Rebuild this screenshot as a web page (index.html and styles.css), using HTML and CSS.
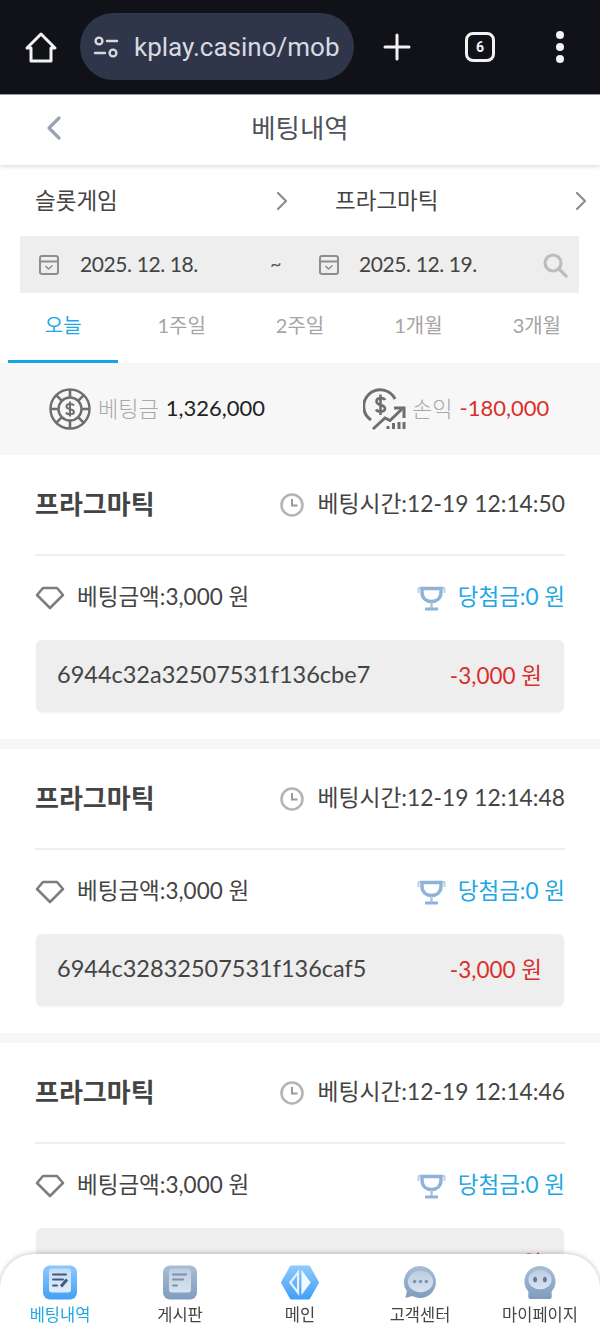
FILE: index.html
```html
<!DOCTYPE html>
<html lang="ko">
<head>
  <meta charset="utf-8">
  <title>베팅내역</title>
  <link rel="stylesheet" href="styles.css">
</head>
<body>
  <div class="browser-bar">
    <svg class="br-home" width="34" height="34" viewBox="0 0 34 34" fill="none" stroke="#f2f2f4" stroke-width="3" stroke-linejoin="round"><path d="M17 4 L31 18 H27 V31 H7 V18 H3 Z"/></svg>
    <div class="url-pill">
      <svg width="26" height="24" viewBox="0 0 26 24" fill="none" stroke="#d8dae2" stroke-width="2.4" stroke-linecap="round"><circle cx="6" cy="6" r="3.4"/><path d="M14 6 H24"/><path d="M2 18 H12"/><circle cx="20" cy="18" r="3.4"/></svg>
      <span class="url-text">kplay.casino/mob</span>
    </div>
    <svg class="br-plus" width="30" height="30" viewBox="0 0 30 30" stroke="#f2f2f4" stroke-width="3" stroke-linecap="round"><path d="M15 3 V27 M3 15 H27"/></svg>
    <div class="br-tabs">6</div>
    <div class="br-more"><i></i><i></i><i></i></div>
  </div>

  <header class="page-head">
    <svg class="back" width="16" height="26" viewBox="0 0 16 26" fill="none" stroke="#9aa3b2" stroke-width="3.2" stroke-linecap="round" stroke-linejoin="round"><path d="M13 3 L3 13 L13 23"/></svg>
    <h1>베팅내역</h1>
  </header>

  <div class="category-row">
    <div class="category">
      <span>슬롯게임</span>
      <svg width="12" height="20" viewBox="0 0 12 20" fill="none" stroke="#8c8c8c" stroke-width="2.2" stroke-linecap="round" stroke-linejoin="round"><path d="M2 2 L10 10 L2 18"/></svg>
    </div>
    <div class="category second">
      <span>프라그마틱</span>
      <svg width="12" height="20" viewBox="0 0 12 20" fill="none" stroke="#8c8c8c" stroke-width="2.2" stroke-linecap="round" stroke-linejoin="round"><path d="M2 2 L10 10 L2 18"/></svg>
    </div>
  </div>

  <div class="date-bar">
    <div class="date-field">
      <svg width="22" height="22" viewBox="0 0 22 22" fill="none" stroke="#8e8e8e" stroke-width="2"><rect x="2" y="2" width="18" height="18" rx="2"/><path d="M2 7.5 H20"/><path d="M7.5 12 L10.5 15 L14.5 11.5" stroke-width="1.6"/></svg>
      <span>2025. 12. 18.</span>
    </div>
    <span class="tilde">~</span>
    <div class="date-field end">
      <svg width="22" height="22" viewBox="0 0 22 22" fill="none" stroke="#8e8e8e" stroke-width="2"><rect x="2" y="2" width="18" height="18" rx="2"/><path d="M2 7.5 H20"/><path d="M7.5 12 L10.5 15 L14.5 11.5" stroke-width="1.6"/></svg>
      <span>2025. 12. 19.</span>
    </div>
    <svg class="search" width="26" height="26" viewBox="0 0 26 26" fill="none" stroke="#bdbdbd" stroke-width="3.2" stroke-linecap="round"><circle cx="11" cy="11" r="8"/><path d="M17 17 L24 24"/></svg>
  </div>

  <nav class="tabs">
    <a class="tab active">오늘</a>
    <a class="tab">1주일</a>
    <a class="tab">2주일</a>
    <a class="tab">1개월</a>
    <a class="tab">3개월</a>
  </nav>

  <div class="summary">
    <div class="sum-item">
      <svg width="42" height="46" viewBox="0 0 42 46" fill="none" stroke="#6e6e6e">
        <circle cx="21" cy="23" r="19.5" stroke-width="2.4"/>
        <circle cx="21" cy="23" r="11.5" stroke-width="2.4"/>
        <path d="M21 3.5 V11.5 M21 34.5 V42.5 M1.5 23 H9.5 M32.5 23 H40.5 M7.2 9.2 L12.9 14.9 M29.1 31.1 L34.8 36.8 M34.8 9.2 L29.1 14.9 M12.9 31.1 L7.2 36.8" stroke-width="2.6"/>
        <path d="M25 19.5 C24 17.5 17.5 17 17.5 20.5 C17.5 24 25 22.5 25 26 C25 29 18 28.8 17 26.5 M21 15.5 V30.5" stroke-width="2"/>
      </svg>
      <span class="sum-label">베팅금</span>
      <span class="sum-value">1,326,000</span>
    </div>
    <div class="sum-item profit">
      <svg width="43" height="44" viewBox="0 0 43 44" fill="none" stroke="#6e6e6e">
        <path d="M8 33 A16.500 16.500 0 1 1 32 12" stroke-width="3"/>
        <path d="M22 13 C21 10.500 13.500 10 13.500 14.500 C13.500 19 22 17 22 21.500 C22 25.500 14.500 25 13 22.500 M17.500 7.500 V28" stroke-width="2.6"/>
        <path d="M10 42 L22 31 L27 33.500 L39 22" stroke-width="3"/>
        <path d="M31 21 H41 V31" stroke-width="3"/>
        <path d="M25 42 V39 M30.500 42 V36 M36 42 V35 M41 42 V35" stroke-width="3"/>
      </svg>
      <span class="sum-label">손익</span>
      <span class="sum-value loss">-180,000</span>
    </div>
  </div>

  <section class="bet-card">
    <div class="card-top">
      <h2>프라그마틱</h2>
      <div class="bet-time">
        <svg width="24" height="24" viewBox="0 0 24 24" fill="none" stroke="#b5b5b5" stroke-width="2.6"><circle cx="12" cy="12" r="10.500"/><path d="M12 6 V12.500 H17.500" stroke="#9a9a9a" stroke-width="2"/></svg>
        <span>베팅시간:12-19 12:14:50</span>
      </div>
    </div>
    <div class="card-mid">
      <div class="stake">
        <svg class="diamond" width="30" height="24" viewBox="0 0 30 24" fill="none" stroke="#7d7d7d" stroke-width="2.6" stroke-linejoin="round"><path d="M8 2 H22 L28 9 L15 22 L2 9 Z"/></svg>
        <span>베팅금액:3,000 원</span>
      </div>
      <div class="win">
        <svg width="29" height="26" viewBox="0 0 29 26" fill="none"><path d="M1 3 H5 M24 3 H28 M1.500 3 V8 M27.500 3 V8" stroke="#bcd2e8" stroke-width="2"/><path d="M5 3.500 H24 V7 C24 13.500 19.500 16.500 14.500 16.500 C9.500 16.500 5 13.500 5 7 Z" stroke="#8fb3d6" stroke-width="3.4"/><path d="M14.500 17 V23" stroke="#a9c4e0" stroke-width="2.400"/><path d="M8 24 H21" stroke="#8fb3d6" stroke-width="3"/></svg>
        <span>당첨금:0 원</span>
      </div>
    </div>
    <div class="tx-box">
      <span class="tx-id">6944c32a32507531f136cbe7</span>
      <span class="loss">-3,000 원</span>
    </div>
  </section>

  <section class="bet-card">
    <div class="card-top">
      <h2>프라그마틱</h2>
      <div class="bet-time">
        <svg width="24" height="24" viewBox="0 0 24 24" fill="none" stroke="#b5b5b5" stroke-width="2.6"><circle cx="12" cy="12" r="10.500"/><path d="M12 6 V12.500 H17.500" stroke="#9a9a9a" stroke-width="2"/></svg>
        <span>베팅시간:12-19 12:14:48</span>
      </div>
    </div>
    <div class="card-mid">
      <div class="stake">
        <svg class="diamond" width="30" height="24" viewBox="0 0 30 24" fill="none" stroke="#7d7d7d" stroke-width="2.6" stroke-linejoin="round"><path d="M8 2 H22 L28 9 L15 22 L2 9 Z"/></svg>
        <span>베팅금액:3,000 원</span>
      </div>
      <div class="win">
        <svg width="29" height="26" viewBox="0 0 29 26" fill="none"><path d="M1 3 H5 M24 3 H28 M1.500 3 V8 M27.500 3 V8" stroke="#bcd2e8" stroke-width="2"/><path d="M5 3.500 H24 V7 C24 13.500 19.500 16.500 14.500 16.500 C9.500 16.500 5 13.500 5 7 Z" stroke="#8fb3d6" stroke-width="3.4"/><path d="M14.500 17 V23" stroke="#a9c4e0" stroke-width="2.400"/><path d="M8 24 H21" stroke="#8fb3d6" stroke-width="3"/></svg>
        <span>당첨금:0 원</span>
      </div>
    </div>
    <div class="tx-box">
      <span class="tx-id">6944c32832507531f136caf5</span>
      <span class="loss">-3,000 원</span>
    </div>
  </section>

  <section class="bet-card">
    <div class="card-top">
      <h2>프라그마틱</h2>
      <div class="bet-time">
        <svg width="24" height="24" viewBox="0 0 24 24" fill="none" stroke="#b5b5b5" stroke-width="2.6"><circle cx="12" cy="12" r="10.500"/><path d="M12 6 V12.500 H17.500" stroke="#9a9a9a" stroke-width="2"/></svg>
        <span>베팅시간:12-19 12:14:46</span>
      </div>
    </div>
    <div class="card-mid">
      <div class="stake">
        <svg class="diamond" width="30" height="24" viewBox="0 0 30 24" fill="none" stroke="#7d7d7d" stroke-width="2.6" stroke-linejoin="round"><path d="M8 2 H22 L28 9 L15 22 L2 9 Z"/></svg>
        <span>베팅금액:3,000 원</span>
      </div>
      <div class="win">
        <svg width="29" height="26" viewBox="0 0 29 26" fill="none"><path d="M1 3 H5 M24 3 H28 M1.500 3 V8 M27.500 3 V8" stroke="#bcd2e8" stroke-width="2"/><path d="M5 3.500 H24 V7 C24 13.500 19.500 16.500 14.500 16.500 C9.500 16.500 5 13.500 5 7 Z" stroke="#8fb3d6" stroke-width="3.4"/><path d="M14.500 17 V23" stroke="#a9c4e0" stroke-width="2.400"/><path d="M8 24 H21" stroke="#8fb3d6" stroke-width="3"/></svg>
        <span>당첨금:0 원</span>
      </div>
    </div>
    <div class="tx-box">
      <span class="tx-id">6944c32632507531f136ca03</span>
      <span class="loss">-3,000 원</span>
    </div>
  </section>

  <footer class="bottom-nav">
    <a class="nav-item active">
      <svg width="34" height="34" viewBox="0 0 34 34">
        <defs>
          <linearGradient id="blueOuter" x1="0" y1="0" x2="0" y2="1"><stop offset="0" stop-color="#8cc8fb"/><stop offset="1" stop-color="#43a1f6"/></linearGradient>
          <linearGradient id="blueInner" x1="0" y1="0" x2="0" y2="1"><stop offset="0" stop-color="#c2dcf6"/><stop offset="1" stop-color="#e0edfa"/></linearGradient>
          <linearGradient id="greyOuter" x1="0" y1="0" x2="0" y2="1"><stop offset="0" stop-color="#a9bdd5"/><stop offset="1" stop-color="#7f9cbf"/></linearGradient>
          <linearGradient id="greyInner" x1="0" y1="0" x2="0" y2="1"><stop offset="0" stop-color="#bccde2"/><stop offset="1" stop-color="#d9e3f0"/></linearGradient>
        </defs>
        <rect width="34" height="34" rx="7" fill="url(#blueOuter)"/>
        <rect x="6" y="3" width="22" height="24" rx="3" fill="url(#blueInner)"/>
        <path d="M10 9 H23 M10 14 H20 M10 20 H14" stroke="#45597c" stroke-width="2" stroke-linecap="round"/>
        <path d="M18 21 L24 14" stroke="#45597c" stroke-width="3"/>
      </svg>
      <span>베팅내역</span>
    </a>
    <a class="nav-item">
      <svg width="34" height="34" viewBox="0 0 34 34">
        <rect width="34" height="34" rx="7" fill="url(#greyOuter)"/>
        <rect x="6" y="3" width="22" height="24" rx="3" fill="url(#greyInner)"/>
        <path d="M10 9 H23 M10 14 H20 M10 20 H14" stroke="#7f90aa" stroke-width="2" stroke-linecap="round"/>
      </svg>
      <span>게시판</span>
    </a>
    <a class="nav-item">
      <svg width="40" height="36" viewBox="0 0 40 36">
        <path d="M11 2 H29 L38 18 L29 34 H11 L2 18 Z" fill="url(#blueOuter)" stroke="url(#blueOuter)" stroke-width="3" stroke-linejoin="round"/>
        <path d="M18 7.500 L10 18 L18 28.500 Z" fill="none" stroke="#e6f2fd" stroke-width="2.200"/>
        <path d="M21.500 5 L31 18 L21.500 31 Z" fill="#f2f8fe"/>
      </svg>
      <span>메인</span>
    </a>
    <a class="nav-item">
      <svg width="34" height="36" viewBox="0 0 34 36">
        <path d="M17 1 A16.500 16.500 0 1 1 9 32 L2 34 L3.500 27 A16.500 16.500 0 0 1 17 1 Z" fill="url(#greyOuter)"/>
        <ellipse cx="17.500" cy="17" rx="13" ry="11" fill="url(#greyInner)"/>
        <circle cx="11.500" cy="17" r="1.800" fill="#7f93b0"/><circle cx="17.500" cy="17" r="1.800" fill="#7f93b0"/><circle cx="23.500" cy="17" r="1.800" fill="#7f93b0"/>
      </svg>
      <span>고객센터</span>
    </a>
    <a class="nav-item">
      <svg width="34" height="36" viewBox="0 0 34 36">
        <path d="M17 1 C26 1 33 8 33 17 C33 22 31 25 29 27 V33 C29 34.500 28 35 27 35 H7 C6 35 5 34.500 5 33 V27 C3 25 1 22 1 17 C1 8 8 1 17 1 Z" fill="url(#greyOuter)"/>
        <ellipse cx="17" cy="15" rx="12" ry="10" fill="url(#greyInner)"/>
        <ellipse cx="12" cy="15" rx="2" ry="2.800" fill="#5f7797"/><ellipse cx="22" cy="15" rx="2" ry="2.800" fill="#5f7797"/>
      </svg>
      <span>마이페이지</span>
    </a>
  </footer>
</body>
</html>
```
FILE: styles.css
```css
* {
  box-sizing: border-box;
}

html,
body {
  height: 1334px;
}

body {
  margin: 0;
  overflow: hidden;
  background-color: #fff;
  font-family: Lato, "Noto Sans CJK KR", sans-serif;
  font-weight: 300;
  color: #444;
}

svg {
  flex-shrink: 0;
}

/* browser chrome */
.browser-bar {
  height: 95px;
  padding-left: 24px;
  display: flex;
  align-items: center;
  background-color: #101218;
  border-bottom: 1px solid #9a9a9e;
}

.url-pill {
  width: 274px;
  height: 67px;
  margin-left: 22px;
  margin-top: -1px;
  padding-left: 13px;
  display: flex;
  align-items: center;
  gap: 15px;
  background-color: #30364a;
  border-radius: 34px;
}

.url-text {
  font-family: Roboto, sans-serif;
  font-weight: 400;
  font-size: 26px;
  color: #d8dae2;
  white-space: nowrap;
}

.br-plus {
  margin-left: 28px;
}

.br-tabs {
  width: 30px;
  height: 30px;
  margin-left: 53px;
  display: flex;
  align-items: center;
  justify-content: center;
  border: 3px solid #f2f2f4;
  border-radius: 8px;
  font-family: Roboto, sans-serif;
  font-size: 14px;
  font-weight: 700;
  color: #f2f2f4;
}

.br-more {
  margin-left: 61px;
  display: flex;
  flex-direction: column;
  gap: 4px;
}

.br-more i {
  width: 8px;
  height: 8px;
  border-radius: 50%;
  background-color: #f2f2f4;
}

/* page header */
.page-head {
  position: relative;
  height: 70px;
  padding-bottom: 8px;
  display: flex;
  align-items: center;
  justify-content: center;
  background-color: #fff;
  box-shadow: 0 2px 4px rgba(0, 0, 0, 0.12);
}

.page-head h1 {
  margin: 0;
  font-size: 26.5px;
  font-weight: 400;
  color: #50535c;
}

.back {
  position: absolute;
  left: 46px;
  top: 20px;
}

.category-row {
  height: 71px;
  display: flex;
}

.category {
  width: 300px;
  padding: 0 12px 0 35px;
  display: flex;
  align-items: center;
  justify-content: space-between;
  font-size: 22.5px;
  font-weight: 400;
  color: #444;
}

.category span {
  padding-bottom: 4px;
}

.category.second {
  padding-left: 35px;
  padding-right: 13px;
}

.date-bar {
  height: 57px;
  margin: 0 21px 0 20px;
  padding: 0 11px 0 18px;
  display: flex;
  align-items: center;
  background-color: #eee;
  font-size: 21px;
  font-weight: 400;
  letter-spacing: -0.4px;
}

.date-field {
  flex: none;
  width: 232px;
  display: flex;
  align-items: center;
  gap: 20px;
  color: #444;
}

.date-field.end {
  width: 190px;
  gap: 19px;
}

.date-field span {
  padding-bottom: 2px;
}

.tilde {
  flex: none;
  width: 48px;
  padding-bottom: 4px;
  font-size: 20px;
  color: #555;
}

.search {
  margin-left: auto;
}

.tabs {
  height: 70px;
  padding: 0 4px;
  display: flex;
}

.tab {
  flex: 1;
  margin: 0 4px;
  padding-top: 17px;
  text-align: center;
  font-size: 20px;
  font-weight: 400;
  color: #a5a5a5;
}

.tab.active {
  color: #1ea7e4;
  border-bottom: 3px solid #12a5e8;
}

.summary {
  height: 92px;
  padding-left: 49px;
  display: flex;
  align-items: center;
  background-color: #f7f7f7;
  font-size: 22px;
  font-weight: 400;
}

.sum-item {
  display: flex;
  align-items: center;
}

.sum-item.profit {
  margin-left: 98px;
}

.profit .sum-label {
  margin-left: 6px;
}

.sum-label {
  margin-left: 7px;
  margin-right: 7px;
  padding-bottom: 4px;
  color: #a8a8a8;
  font-weight: 300;
}

.sum-value {
  padding-bottom: 4px;
  color: #222;
}

.loss {
  color: #d9302c;
}

/* bet cards */
.bet-card {
  height: 294px;
  padding: 0 35px;
  border-bottom: 10px solid #f7f7f7;
  background-color: #fff;
}

.card-top {
  height: 101px;
  display: flex;
  align-items: center;
  justify-content: space-between;
  border-bottom: 2px solid #eee;
}

.card-top h2 {
  margin: 0;
  padding-bottom: 5px;
  font-size: 26px;
  font-weight: 700;
  color: #444;
}

.bet-time {
  display: flex;
  align-items: center;
  gap: 13px;
  font-size: 22.8px;
  font-weight: 400;
}

.bet-time span {
  padding-bottom: 4px;
}

.card-mid {
  height: 84px;
  display: flex;
  align-items: center;
  justify-content: space-between;
  font-size: 22.5px;
  font-weight: 400;
}

.stake,
.win {
  display: flex;
  align-items: center;
  gap: 12px;
}

.stake span,
.win span {
  padding-bottom: 6px;
}

.win {
  color: #1ea7e4;
}

.tx-box {
  height: 72px;
  margin: 0 1px;
  padding: 0 22px 0 21px;
  display: flex;
  align-items: center;
  justify-content: space-between;
  background-color: #eee;
  border-radius: 6px;
  box-shadow: 0 1px 2px rgba(0, 0, 0, 0.05);
  font-size: 22.5px;
  font-weight: 400;
}

.tx-box span {
  padding-bottom: 4px;
}

.tx-id {
  font-size: 23.5px;
}

/* bottom navigation */
.bottom-nav {
  position: fixed;
  left: 0;
  right: 0;
  bottom: 0;
  height: 80px;
  padding-top: 11px;
  display: flex;
  background-color: #fff;
  border-radius: 34px 34px 0 0;
  box-shadow: 0 -1px 5px rgba(0, 0, 0, 0.22);
}

.nav-item {
  flex: 1;
  display: flex;
  flex-direction: column;
  align-items: center;
  gap: 2px;
  font-size: 16.5px;
  font-weight: 400;
  color: #444;
}

.nav-item svg {
  height: 35px;
}

.nav-item.active {
  color: #1ea7e4;
}
```
